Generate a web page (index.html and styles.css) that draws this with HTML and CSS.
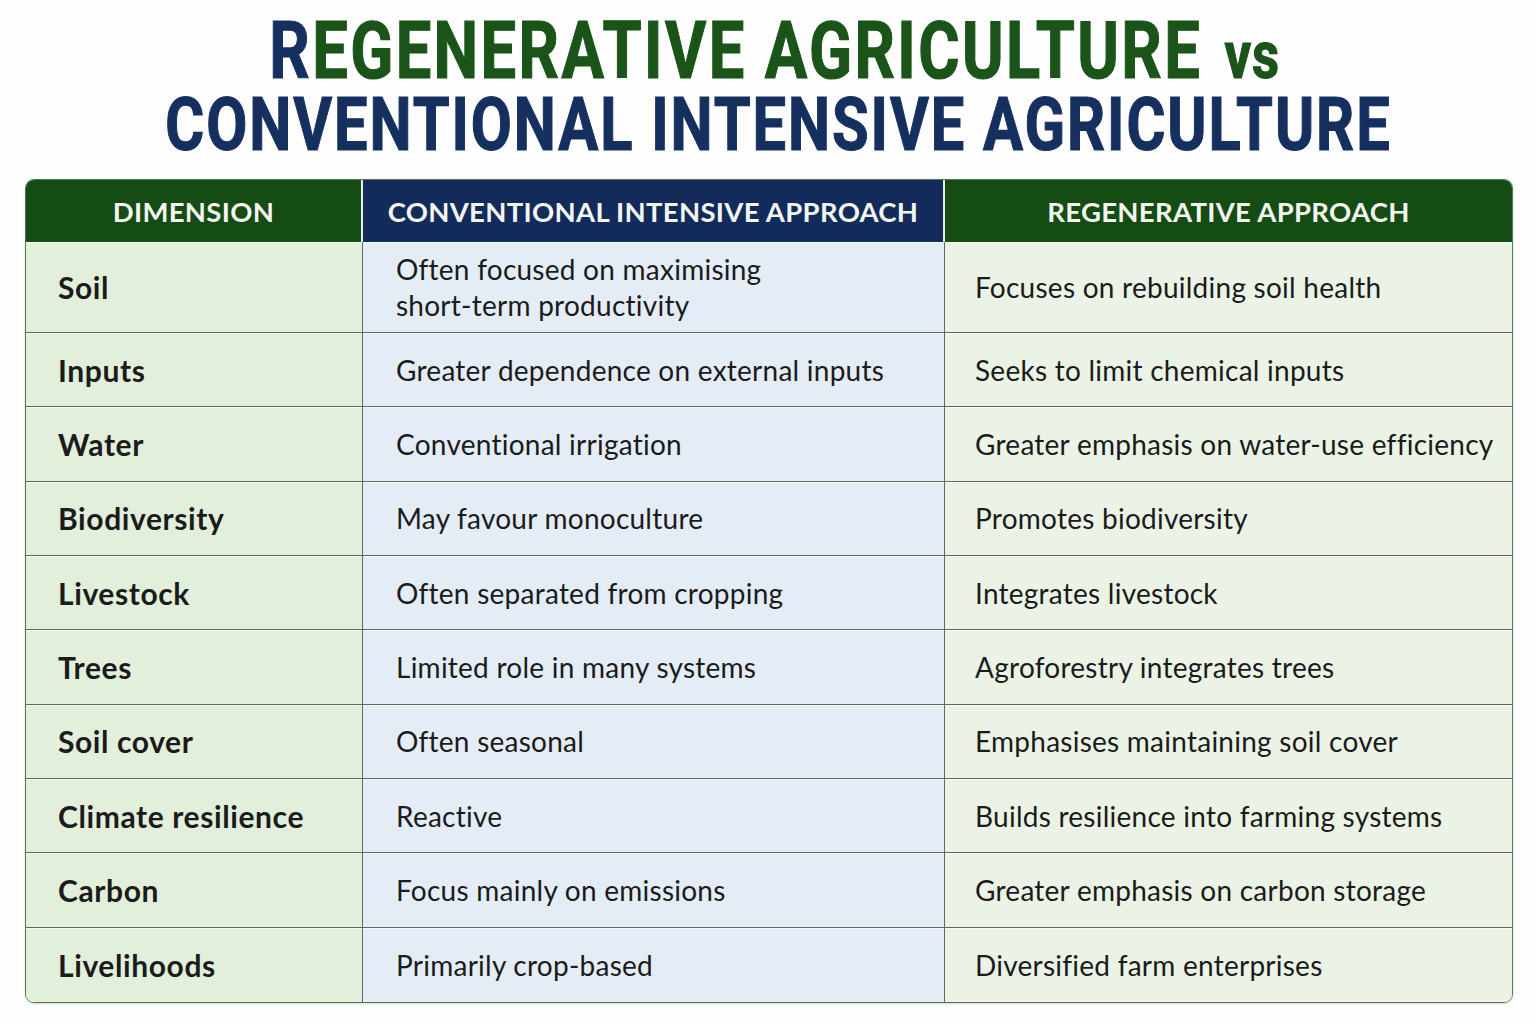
FILE: index.html
```html
<!DOCTYPE html>
<html lang="en">
<head>
<meta charset="utf-8">
<title>Regenerative vs Conventional Agriculture</title>
<link rel="stylesheet" href="styles.css">
</head>
<body>
<header class="title">
  <h1 class="line line-1"><span class="squeeze"><span class="navy">R</span><span class="green">EGENERATIVE AGRICULTURE</span><span class="vs">vs</span></span></h1>
  <h1 class="line line-2"><span class="squeeze">CONVENTIONAL INTENSIVE AGRICULTURE</span></h1>
</header>
<div class="table">
  <div class="th th-green">DIMENSION</div>
  <div class="th th-navy">CONVENTIONAL INTENSIVE APPROACH</div>
  <div class="th th-green last">REGENERATIVE APPROACH</div>

  <div class="td dim">Soil</div>
  <div class="td conv">Often focused on maximising<br>short-term productivity</div>
  <div class="td regen">Focuses on rebuilding soil health</div>

  <div class="td dim">Inputs</div>
  <div class="td conv">Greater dependence on external inputs</div>
  <div class="td regen">Seeks to limit chemical inputs</div>

  <div class="td dim">Water</div>
  <div class="td conv">Conventional irrigation</div>
  <div class="td regen">Greater emphasis on water-use efficiency</div>

  <div class="td dim">Biodiversity</div>
  <div class="td conv">May favour monoculture</div>
  <div class="td regen">Promotes biodiversity</div>

  <div class="td dim">Livestock</div>
  <div class="td conv">Often separated from cropping</div>
  <div class="td regen">Integrates livestock</div>

  <div class="td dim">Trees</div>
  <div class="td conv">Limited role in many systems</div>
  <div class="td regen">Agroforestry integrates trees</div>

  <div class="td dim">Soil cover</div>
  <div class="td conv">Often seasonal</div>
  <div class="td regen">Emphasises maintaining soil cover</div>

  <div class="td dim">Climate resilience</div>
  <div class="td conv">Reactive</div>
  <div class="td regen">Builds resilience into farming systems</div>

  <div class="td dim">Carbon</div>
  <div class="td conv">Focus mainly on emissions</div>
  <div class="td regen">Greater emphasis on carbon storage</div>

  <div class="td dim bottom">Livelihoods</div>
  <div class="td conv bottom">Primarily crop-based</div>
  <div class="td regen bottom">Diversified farm enterprises</div>
</div>
</body>
</html>
```

FILE: styles.css
```css
* { box-sizing: border-box; }
html, body { margin: 0; padding: 0; background: #fdfdfd; }
body {
  width: 1536px;
  height: 1024px;
  font-family: Lato, "Open Sans", sans-serif;
  color: #1b1b1b;
  overflow: hidden;
}

.title {
  padding-top: 14px;
}
.line {
  margin: 0;
  display: flex;
  justify-content: center;
  white-space: nowrap;
  font-family: Roboto, "DejaVu Sans Condensed", sans-serif;
  font-weight: 700;
  color: #15305f;
  -webkit-text-stroke: 1.2px currentColor;
  letter-spacing: 3px;
}
.squeeze {
  display: inline-block;
  transform: scaleX(0.8);
  transform-origin: center;
}
.line-1 {
  height: 74px;
  font-size: 79px;
  line-height: 74px;
  padding-left: 14px;
}
.line-2 {
  height: 75px;
  font-size: 74.5px;
  line-height: 74px;
  letter-spacing: 2.4px;
  padding-left: 20px;
}
.navy { color: #15305f; }
.green { color: #1b5418; }
.vs {
  color: #1b5418;
  font-size: 66px;
  letter-spacing: 1px;
  margin-left: 28px;
}

.table {
  margin: 16px 0 0 25px;
  width: 1488px;
  height: 824px;
  display: grid;
  grid-template-columns: 337px 582px 1fr;
  grid-template-rows: 62px 91px repeat(9, 1fr);
  border: 1px solid #4f7a4f;
  border-radius: 9px;
  overflow: hidden;
  box-shadow: 0 1px 2px rgba(0,0,0,0.15);
}

.th {
  display: flex;
  align-items: center;
  justify-content: center;
  color: #f4f6f2;
  font-weight: 700;
  font-size: 27.5px;
  letter-spacing: 0.3px;
  border-right: 2px solid #e8ece8;
}
.th.last { border-right: none; }
.th-green { background: #154c14; }
.th-navy { background: #132b5b; }

.td {
  display: flex;
  align-items: center;
  font-size: 28px;
  letter-spacing: 0.25px;
  line-height: 36px;
  border-bottom: 1px solid #5c6b5d;
  border-right: 1px solid #5c6b5d;
  box-shadow: inset 0 1px 0 rgba(255,255,255,0.7);
}
.td.bottom { border-bottom: none; }
.dim {
  background: #e2efdb;
  font-weight: 700;
  font-size: 30px;
  letter-spacing: 0.6px;
  padding-left: 32px;
}
.conv {
  background: #e4ecf6;
  padding-left: 33px;
}
.regen {
  background: #eaf3e6;
  padding-left: 30px;
  border-right: none;
}
```
